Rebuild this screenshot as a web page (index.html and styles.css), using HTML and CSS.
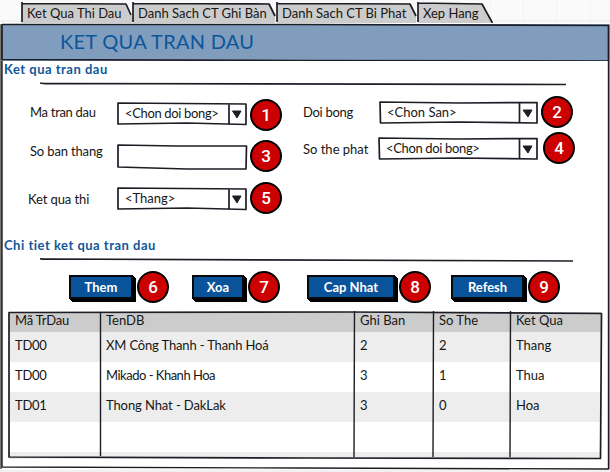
FILE: index.html
```html
<!DOCTYPE html>
<html lang="vi">
<head>
<meta charset="utf-8">
<title>Ket qua tran dau</title>
<link rel="stylesheet" href="styles.css">
</head>
<body>
<div class="app">
  <nav class="tabs">
    <a class="tab tab-a"><svg class="frame" preserveAspectRatio="none" viewBox="0 0 111 23"><path class="fill" d="M1 3.5H105L111 16V23H1Z"/><path class="ink" d="M1 2V22M1 3.5L104 4L105 4L110 15"/></svg><span class="t1">Ket Qua Thi Dau</span></a>
    <a class="tab tab-b"><svg class="frame" preserveAspectRatio="none" viewBox="0 0 144 23"><path class="fill" d="M1 3.5H138L143 16V23H1Z"/><path class="ink" d="M1 2V22M1 3.5L137 4L143 16"/></svg><span class="t2">Danh Sach CT Ghi Bàn</span></a>
    <a class="tab tab-c"><svg class="frame" preserveAspectRatio="none" viewBox="0 0 141 23"><path class="fill" d="M1 3.5H134L140 16V23H1Z"/><path class="ink" d="M1 2V22M1 3.5L134 4L140 16"/></svg><span class="t3">Danh Sach CT Bi Phat</span></a>
    <a class="tab tab-d"><svg class="frame" preserveAspectRatio="none" viewBox="0 0 78 23"><path class="fill" d="M1 3.5H65L75 23H1Z"/><path class="ink" d="M1 2V22M1 3L65 4L75.500 23"/></svg><span class="t4">Xep Hang</span></a>
  </nav>
  <header class="title"><svg class="frame" preserveAspectRatio="none" viewBox="0 0 610 38"><path class="ink" d="M2 .5L300 .5L608.500 1.500V38L300 37.500L2 36.500V.5"/></svg><h1>KET QUA TRAN DAU</h1></header>
  <main class="panel">
    <svg class="frame" preserveAspectRatio="none" viewBox="0 0 610 408"><path class="ink thin" d="M2 0V406L300 407L608.500 408V0"/></svg>
    <h2 class="h-a">Ket qua tran dau</h2>
    <svg class="rule rule-a" viewBox="0 0 534 4"><path class="ink" d="M0 1Q4 2 10 1.500L526 2.500"/></svg>
    <section class="form">
      <div class="col left">
        <div class="field"><label class="l1">Ma tran dau</label><div class="combo"><svg class="frame" preserveAspectRatio="none" viewBox="0 0 131 24"><path class="ink" d="M1 1L129 2V22.500L70 21L1 22Z M112 2V22"/><path class="arrow" d="M115.500 9L124 9L120 16Z"/></svg><span class="v1">&lt;Chon doi bong&gt;</span></div><b class="pin">1</b></div>
        <div class="field"><label class="l2">So ban thang</label><div class="combo input"><svg class="frame" preserveAspectRatio="none" viewBox="0 0 131 26"><path class="ink" d="M1 1L60 2L129.500 2L129 25L70 25L1 23Z"/></svg></div><b class="pin">3</b></div>
        <div class="field"><label class="l3">Ket qua thi</label><div class="combo"><svg class="frame" preserveAspectRatio="none" viewBox="0 0 131 24"><path class="ink" d="M1 1L129 2V22.500L70 21L1 22Z M112 2V22"/><path class="arrow" d="M115.500 9L124 9L120 16Z"/></svg><span class="v3">&lt;Thang&gt;</span></div><b class="pin">5</b></div>
      </div>
      <div class="col right">
        <div class="field"><label class="l4">Doi bong</label><div class="combo"><svg class="frame" preserveAspectRatio="none" viewBox="0 0 160 24"><path class="ink" d="M1 1L80 2L158 1.500V22L80 21L1.500 22Z M140.500 2V22"/><path class="arrow" d="M144 9L153 9L149 16Z"/></svg><span class="v4">&lt;Chon San&gt;</span></div><b class="pin">2</b></div>
        <div class="field low"><label class="l5">So the phat</label><div class="combo"><svg class="frame" preserveAspectRatio="none" viewBox="0 0 160 24"><path class="ink" d="M1 1L80 2L159 1.500V22L80 21L1.500 22Z M141.500 2V22"/><path class="arrow" d="M145 9L154 9L150 16Z"/></svg><span class="v5">&lt;Chon doi bong&gt;</span></div><b class="pin">4</b></div>
      </div>
    </section>
    <h2 class="h-b">Chi tiet ket qua tran dau</h2>
    <svg class="rule rule-b" viewBox="0 0 534 4"><path class="ink" d="M0 .5Q2 1.500 8 1L533 3"/></svg>
    <div class="actions">
      <button class="b1"><span>Them</span></button><b class="pin">6</b>
      <button class="b2"><span>Xoa</span></button><b class="pin">7</b>
      <button class="b3"><span>Cap Nhat</span></button><b class="pin">8</b>
      <button class="b4"><span>Refesh</span></button><b class="pin">9</b>
    </div>
    <div class="grid">
      <svg class="frame" preserveAspectRatio="none" viewBox="0 0 595 148"><path class="ink" d="M1 1.500L340 1L593.500 2.500L592.500 147.500L300 147L1 146Z"/><path class="ink thin" d="M92.500 2V145M346.500 0L346 146M425.500 0L425 146M502.500 0L502 146"/></svg>
      <div class="row head"><span class="g1">Mã TrDau</span><span class="g2">TenDB</span><span class="g3">Ghi Ban</span><span class="g4">So The</span><span class="g5">Ket Qua</span></div>
      <div class="row odd"><span class="td">TD00</span><span class="n1">XM Công Thanh - Thanh Hoá</span><span>2</span><span>2</span><span class="r1">Thang</span></div>
      <div class="row"><span class="td">TD00</span><span class="n2">Mikado - Khanh Hoa</span><span>3</span><span>1</span><span class="r2">Thua</span></div>
      <div class="row odd"><span class="td">TD01</span><span class="n3">Thong Nhat - DakLak</span><span>3</span><span>0</span><span class="r3">Hoa</span></div>
      <div class="row"></div>
      <div class="row odd last"></div>
    </div>
  </main>
</div>
</body>
</html>
```
FILE: styles.css
```css
* { box-sizing: border-box; }
body {
  margin: 0;
  font: 13px/16px Lato, "Open Sans", sans-serif;
  font-variant-ligatures: none;
  color: #161616;
}
.app {
  width: 610px;
  height: 472px;
  overflow: hidden;
  display: flex;
  flex-direction: column;
  background-color: #fafafa;
  background-image:
    linear-gradient(#f1f1f1 2px, transparent 2px),
    linear-gradient(90deg, #f2f2f2 1px, transparent 1px);
  background-size: 100% 450px, 33.4px 100%;
  background-position: 0 20px, 22px 0;
}
.frame {
  position: absolute;
  inset: 0;
  width: 100%;
  height: 100%;
  overflow: visible;
}
.ink { fill: none; stroke: #1d1d26; stroke-width: 1.7; stroke-linejoin: round; }
.thin { stroke-width: 1.4; }
.fill { fill: #ccc; }
.arrow { fill: #1d1d26; stroke: #1d1d26; stroke-linejoin: round; }
.tabs { display: flex; height: 23px; padding-left: 21px; flex: none; }
.tab { position: relative; height: 23px; padding: 5px 0 0 6px; white-space: nowrap; }
.tab span { position: relative; }
.tab-a { width: 111px; }
.tab-b { width: 144px; }
.tab-c { width: 141px; }
.tab-d { width: 78px; }
.title {
  position: relative;
  flex: none;
  height: 38px;
  background: linear-gradient(90deg, #777970 2px, #819dbe 2px, #819dbe 609px, #aaa 609px);
  border-top: 1px solid #fff;
}
h1 {
  position: relative;
  margin: 0;
  padding: 5px 0 0 60px;
  font-size: 20px;
  line-height: 24px;
  font-weight: 400;
  letter-spacing: .27px;
  color: #0b5699;
}
.panel {
  position: relative;
  flex: none;
  height: 408px;
  display: flex;
  flex-direction: column;
  background: linear-gradient(90deg, #777970 2px, #fff 2px, #fff 609px, #a6a6b4 609px);
}
h2 { margin: 0; padding-left: 4px; font-size: 13px; line-height: 16px; font-weight: 700; letter-spacing: .5px; color: #10589a; }
.rule { width: 534px; height: 4px; margin-left: 40px; flex: none; display: block; }
.rule-a { margin-top: 5px; }
.form { display: flex; height: 151px; padding-top: 13px; flex: none; }
.col { display: flex; flex-direction: column; }
.left { width: 275px; padding-left: 28px; }
.right { width: 304px; padding-left: 28px; }
.field { display: flex; height: 41px; flex: none; }
.field label { flex: none; white-space: nowrap; letter-spacing: -.3px; }
.left label { width: 89px; padding: 5px 0 0 2px; }
.left .l2 { padding-top: 3px; letter-spacing: -.15px; }
.left .l3 { padding: 9px 0 0; letter-spacing: -.1px; }
.right label { width: 76px; padding-top: 6px; }
.combo { position: relative; width: 131px; height: 24px; margin-top: 3px; padding: 3px 0 0 8px; flex: none; white-space: nowrap; }
.combo span { position: relative; }
.v1, .v5 { letter-spacing: -.35px; }
.left .input { height: 26px; margin-top: 4px; }
.left .field:nth-child(3) .combo { margin-top: 5px; }
.left .field:nth-child(3) { margin-top: 1px; }
.right .combo { width: 160px; margin-top: 3px; }
.right { margin-top: -1px; }
.right .pin { margin: -2px 0 0 2px; }
.right .low { height: 36px; margin-top: -5px; }
.right .low label { width: 75px; padding-top: 7px; letter-spacing: 0; }
.right .low .pin { margin: -2px 0 0 5px; }
.pin {
  flex: none;
  width: 32px;
  height: 32px;
  margin-left: 2px;
  border: 2px solid #000;
  border-radius: 50%;
  background: #c00;
  color: #fff;
  font-family: Roboto, sans-serif;
  font-size: 17px;
  font-weight: 500;
  line-height: 28px;
  text-align: center;
}
.rule-b { margin-top: 5px; }
.actions { display: flex; height: 49px; padding: 9px 0 0 69px; flex: none; }
button {
  flex: none;
  height: 24px;
  margin-top: 4px;
  padding: 0;
  border: 2px solid #05080d;
  background: #09539a;
  box-shadow: 1px 1px #000, 2px 2px #000, 3px 3px #000;
  color: #fff;
  font: 700 13px/18px Lato, sans-serif;
}
.b1 { width: 64px; }
.b2 { width: 52px; margin-left: 23px; }
.b3 { width: 88px; margin-left: 27px; }
.b4 { width: 73px; margin-left: 20px; }
.actions .pin { margin-left: 4px; }
.grid { position: relative; width: 595px; height: 148px; margin-left: 8px; flex: none; padding-top: 1px; }
.row { display: grid; grid-template-columns: 91px 254px 79px 77px 1fr; height: 30px; margin: 0 2px 0 1px; padding: 5px 0 0 6px; white-space: nowrap; }
.head { height: 20px; padding-top: 0; background: #ccc; }
.odd { background: #ededed; }
.last { height: 7px; padding: 0; }
.td { letter-spacing: -.3px; }
.g1 { letter-spacing: -.2px; }
.n1 { letter-spacing: -.15px; }
.n2 { letter-spacing: -.5px; }
.n3 { letter-spacing: -.1px; }
```
